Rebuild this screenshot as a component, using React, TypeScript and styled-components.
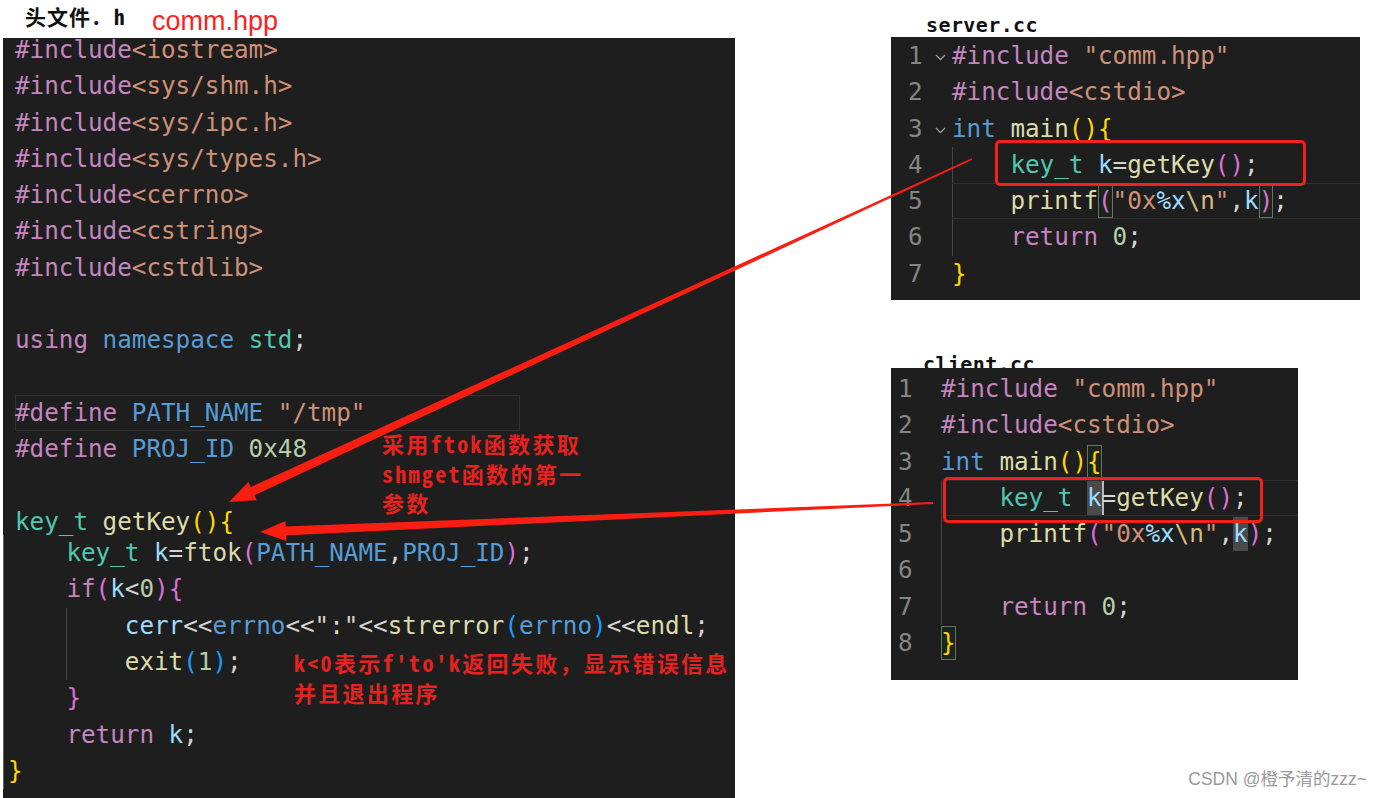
import React from "react";
import styled, { createGlobalStyle, css } from "styled-components";

const GlobalStyle = createGlobalStyle`
  html, body { margin: 0; padding: 0; background: #ffffff; }
  body { width: 1381px; height: 798px; overflow: hidden; }
`;

const C = {
  kw: "#c586c0",
  str: "#ce9178",
  blue: "#569cd6",
  type: "#4ec9b0",
  fn: "#dcdcaa",
  v: "#9cdcfe",
  num: "#b5cea8",
  txt: "#d4d4d4",
  gold: "#ffd700",
  orchid: "#da70d6",
  sky: "#179fff",
  esc: "#d7ba7d",
};

type Tok = [string, string, ("match" | "word" | "cursor")?];

const Page = styled.div`
  position: relative;
  width: 1381px;
  height: 798px;
  display: flex;
  align-items: flex-start;
  background: #ffffff;
  overflow: hidden;
`;

const LeftColumn = styled.div`
  width: 732px;
  margin-left: 3px;
  display: flex;
  flex-direction: column;
`;

const FileHeader = styled.div`
  height: 38px;
  display: flex;
  align-items: flex-start;
`;

const FileLabel = styled.div`
  width: 127px;
  margin-left: 22px;
  padding-top: 4px;
  font-family: "Noto Sans Mono CJK SC", "Noto Sans CJK SC", monospace;
  font-weight: 700;
  font-size: 21px;
  line-height: 24px;
  letter-spacing: 1px;
  color: #111111;
  white-space: pre;
`;

const FileName = styled.div`
  padding-top: 6px;
  font-family: "Liberation Sans", Arial, sans-serif;
  font-size: 27px;
  line-height: 30px;
  color: #ff1f1f;
`;

const mono = css`
  font-family: "DejaVu Sans Mono", "Liberation Mono", monospace;
  font-size: 24.25px;
`;

const CodePanel = styled.div`
  position: relative;
  width: 732px;
  height: 760px;
  background: #1e1e1e;
  ${mono};
`;

const CodeBlock = styled.div<{ $pad: number; $shift: number; $edge?: boolean }>`
  padding-left: ${(p) => p.$pad}px;
  margin-top: ${(p) => p.$shift}px;
  ${(p) =>
    p.$edge &&
    css`
      box-shadow: inset 1px 0 0 #5c5c5c;
    `}
`;

const Line = styled.div<{ $box?: number; $guide?: number; $current?: boolean }>`
  height: 36.3px;
  line-height: 36.3px;
  white-space: pre;
  color: ${C.txt};
  ${(p) =>
    p.$box &&
    css`
      width: ${p.$box}px;
      box-shadow: inset 0 0 0 1px #313131;
    `}
  ${(p) =>
    p.$guide !== undefined &&
    css`
      background: linear-gradient(#474747, #474747) no-repeat ${p.$guide}px 0 / 1px 100%;
    `}
  ${(p) =>
    p.$current &&
    css`
      box-shadow: inset 0 1px 0 #2e2e2e, inset 0 -1px 0 #2e2e2e;
    `}
`;

const CodeCell = styled(Line)`
  flex: 1;
`;

const Tk = styled.span<{ $c: string; $mark?: string }>`
  color: ${(p) => p.$c};
  ${(p) =>
    p.$mark === "match" &&
    css`
      display: inline-block;
      line-height: 34px;
      background: rgba(0, 100, 0, 0.12);
      box-shadow: inset 0 0 0 1px #6e6e6e;
    `}
  ${(p) =>
    p.$mark === "word" &&
    css`
      display: inline-block;
      line-height: 34px;
      background: #4a4a4a;
    `}
  ${(p) =>
    p.$mark === "cursor" &&
    css`
      display: inline-block;
      line-height: 34px;
      background: #4a4a4a;
      box-shadow: 2px 0 0 #b8b8b8;
    `}
`;

const RightColumn = styled.div`
  margin-left: 156px;
  display: flex;
  flex-direction: column;
`;

const EditorTitle = styled.div<{ $pad: number; $top: number; $lh: number }>`
  box-sizing: border-box;
  padding-left: ${(p) => p.$pad}px;
  padding-top: ${(p) => p.$top}px;
  line-height: ${(p) => p.$lh}px;
  height: ${(p) => p.$top + p.$lh}px;
  font-family: "DejaVu Sans Mono", monospace;
  font-weight: 700;
  font-size: 20px;
  letter-spacing: 0.4px;
  color: #111111;
  white-space: pre;
`;

const Editor = styled.div<{ $w: number; $h: number; $top: number; $pt: number }>`
  position: relative;
  width: ${(p) => p.$w}px;
  height: ${(p) => p.$h}px;
  margin-top: ${(p) => p.$top}px;
  padding-top: ${(p) => p.$pt}px;
  box-sizing: border-box;
  background: #1e1e1e;
  ${mono};
`;

const Row = styled.div<{ $pad: number }>`
  display: flex;
  padding-left: ${(p) => p.$pad}px;
  height: 36.3px;
`;

const Num = styled.span`
  flex: none;
  width: 14.6px;
  line-height: 36.3px;
  text-align: right;
  color: #858585;
`;

const Fold = styled.span<{ $w: number }>`
  flex: none;
  width: ${(p) => p.$w}px;
  display: flex;
  align-items: center;
  padding-left: 12px;
  padding-top: 3px;
  box-sizing: border-box;
`;

const Callout = styled.div<{ $x: number; $y: number; $w: number; $h: number }>`
  position: absolute;
  left: ${(p) => p.$x}px;
  top: ${(p) => p.$y}px;
  width: ${(p) => p.$w}px;
  height: ${(p) => p.$h}px;
  box-sizing: border-box;
  border: 3.5px solid #f2211b;
  border-radius: 5px;
  pointer-events: none;
`;

const Note = styled.div<{ $x: number; $y: number }>`
  position: absolute;
  left: ${(p) => p.$x}px;
  top: ${(p) => p.$y}px;
  font-family: "Noto Sans Mono CJK SC", "Noto Sans CJK SC", monospace;
  font-weight: 700;
  font-size: 22px;
  letter-spacing: 2.3px;
  line-height: 29.5px;
  color: #e6221e;
  white-space: pre;
`;

const Overlay = styled.svg`
  position: absolute;
  left: 0;
  top: 0;
  width: 1381px;
  height: 798px;
  pointer-events: none;
`;

const Watermark = styled.div`
  position: absolute;
  right: 14px;
  bottom: 8px;
  font-family: "Liberation Sans", "Noto Sans CJK SC", sans-serif;
  font-size: 17.5px;
  color: #9a9a9a;
  text-shadow: 0 0 1px #ffffff;
`;

const inc = (h: string): Tok[] => [
  ["#include", C.kw],
  [h, C.str],
];

const leftTop: { toks: Tok[]; box?: number }[] = [
  { toks: inc("<iostream>") },
  { toks: inc("<sys/shm.h>") },
  { toks: inc("<sys/ipc.h>") },
  { toks: inc("<sys/types.h>") },
  { toks: inc("<cerrno>") },
  { toks: inc("<cstring>") },
  { toks: inc("<cstdlib>") },
  { toks: [] },
  {
    toks: [
      ["using", C.kw],
      [" ", C.txt],
      ["namespace", C.blue],
      [" ", C.txt],
      ["std", C.type],
      [";", C.txt],
    ],
  },
  { toks: [] },
  {
    toks: [
      ["#define", C.kw],
      [" PATH_NAME", C.blue],
      [" ", C.txt],
      ['"/tmp"', C.str],
    ],
    box: 505,
  },
  {
    toks: [
      ["#define", C.kw],
      [" PROJ_ID", C.blue],
      [" 0x48", C.num],
    ],
  },
  { toks: [] },
  {
    toks: [
      ["key_t", C.type],
      [" getKey", C.fn],
      ["()", C.gold],
      ["{", C.gold],
    ],
  },
];

const leftBottom: { toks: Tok[]; guide?: number }[] = [
  {
    toks: [
      ["    key_t", C.type],
      [" k", C.v],
      ["=", C.txt],
      ["ftok", C.fn],
      ["(", C.orchid],
      ["PATH_NAME", C.blue],
      [",", C.txt],
      ["PROJ_ID", C.blue],
      [")", C.orchid],
      [";", C.txt],
    ],
  },
  {
    toks: [
      ["    if", C.kw],
      ["(", C.orchid],
      ["k", C.v],
      ["<", C.txt],
      ["0", C.num],
      [")", C.orchid],
      ["{", C.orchid],
    ],
  },
  {
    toks: [
      ["        cerr", C.v],
      ["<<", C.txt],
      ["errno", C.blue],
      ["<<", C.txt],
      ['":"', "#ddd2c6"],
      ["<<", C.txt],
      ["strerror", C.fn],
      ["(", C.sky],
      ["errno", C.blue],
      [")", C.sky],
      ["<<", C.txt],
      ["endl", C.fn],
      [";", C.txt],
    ],
    guide: 58,
  },
  {
    toks: [
      ["        exit", C.fn],
      ["(", C.sky],
      ["1", C.num],
      [")", C.sky],
      [";", C.txt],
    ],
    guide: 58,
  },
  { toks: [["    }", C.orchid]] },
  {
    toks: [
      ["    return", C.kw],
      [" k", C.v],
      [";", C.txt],
    ],
  },
  { toks: [["}", C.gold]] },
];

type EdLine = { toks: Tok[]; fold?: boolean; guide?: boolean; current?: boolean };

const serverLines: EdLine[] = [
  {
    toks: [
      ["#include", C.kw],
      [" ", C.txt],
      ['"comm.hpp"', C.str],
    ],
    fold: true,
  },
  { toks: inc("<cstdio>") },
  {
    toks: [
      ["int", C.blue],
      [" main", C.fn],
      ["()", C.gold],
      ["{", C.gold],
    ],
    fold: true,
  },
  {
    toks: [
      ["    key_t", C.type],
      [" k", C.v],
      ["=", C.txt],
      ["getKey", C.fn],
      ["()", C.orchid],
      [";", C.txt],
    ],
    guide: true,
  },
  {
    toks: [
      ["    printf", C.fn],
      ["(", C.orchid, "match"],
      ['"0x', C.str],
      ["%x", C.v],
      ["\\n", C.esc],
      ['"', C.str],
      [",", C.txt],
      ["k", C.v],
      [")", C.orchid, "match"],
      [";", C.txt],
    ],
    guide: true,
    current: true,
  },
  {
    toks: [
      ["    return", C.kw],
      [" 0", C.num],
      [";", C.txt],
    ],
    guide: true,
  },
  { toks: [["}", C.gold]] },
];

const clientLines: EdLine[] = [
  {
    toks: [
      ["#include", C.kw],
      [" ", C.txt],
      ['"comm.hpp"', C.str],
    ],
  },
  { toks: inc("<cstdio>") },
  {
    toks: [
      ["int", C.blue],
      [" main", C.fn],
      ["()", C.gold],
      ["{", C.gold, "match"],
    ],
  },
  {
    toks: [
      ["    key_t", C.type],
      [" ", C.txt],
      ["k", C.v, "cursor"],
      ["=", C.txt],
      ["getKey", C.fn],
      ["()", C.orchid],
      [";", C.txt],
    ],
    guide: true,
    current: true,
  },
  {
    toks: [
      ["    printf", C.fn],
      ["(", C.orchid],
      ['"0x', C.str],
      ["%x", C.v],
      ["\\n", C.esc],
      ['"', C.str],
      [",", C.txt],
      ["k", C.v, "word"],
      [")", C.orchid],
      [";", C.txt],
    ],
    guide: true,
  },
  { toks: [], guide: true },
  {
    toks: [
      ["    return", C.kw],
      [" 0", C.num],
      [";", C.txt],
    ],
    guide: true,
  },
  { toks: [["}", C.gold, "match"]] },
];

const Tokens = ({ toks }: { toks: Tok[] }) => (
  <>
    {toks.map(([t, c, m], i) => (
      <Tk key={i} $c={c} $mark={m}>
        {t}
      </Tk>
    ))}
  </>
);

const Chevron = () => (
  <svg width="11" height="7" viewBox="0 0 11 7">
    <path d="M1 1 L5.5 5.5 L10 1" stroke="#9a9a9a" strokeWidth="1.3" fill="none" />
  </svg>
);

function arrowShapes(
  tx: number,
  ty: number,
  hx: number,
  hy: number,
  w0: number,
  w1: number,
  headLen: number,
  headHalf: number
) {
  const dx = hx - tx;
  const dy = hy - ty;
  const L = Math.hypot(dx, dy);
  const ux = dx / L;
  const uy = dy / L;
  const nx = -uy;
  const ny = ux;
  const bx = hx - ux * headLen;
  const by = hy - uy * headLen;
  const pt = (x: number, y: number) => `${x.toFixed(1)},${y.toFixed(1)}`;
  const shaft = [
    pt(tx + (nx * w0) / 2, ty + (ny * w0) / 2),
    pt(bx + ux * 2 + (nx * w1) / 2, by + uy * 2 + (ny * w1) / 2),
    pt(bx + ux * 2 - (nx * w1) / 2, by + uy * 2 - (ny * w1) / 2),
    pt(tx - (nx * w0) / 2, ty - (ny * w0) / 2),
  ].join(" ");
  const head = [
    pt(hx, hy),
    pt(bx + nx * headHalf, by + ny * headHalf),
    pt(bx - nx * headHalf, by - ny * headHalf),
  ].join(" ");
  return { shaft, head };
}

const Arrow = (p: {
  tx: number;
  ty: number;
  hx: number;
  hy: number;
  w0: number;
  w1: number;
}) => {
  const { shaft, head } = arrowShapes(p.tx, p.ty, p.hx, p.hy, p.w0, p.w1, 26, 10);
  return (
    <g fill="#f81e12">
      <polygon points={shaft} />
      <polygon points={head} />
    </g>
  );
};

const EditorBody = ({
  lines,
  pad,
  foldW,
}: {
  lines: EdLine[];
  pad: number;
  foldW: number;
}) => (
  <>
    {lines.map((l, i) => (
      <Row key={i} $pad={pad}>
        <Num>{i + 1}</Num>
        <Fold $w={foldW}>{l.fold ? <Chevron /> : null}</Fold>
        <CodeCell $guide={l.guide ? 0 : undefined} $current={l.current}>
          <Tokens toks={l.toks} />
        </CodeCell>
      </Row>
    ))}
  </>
);

export default function App() {
  return (
    <>
      <GlobalStyle />
      <Page>
        <LeftColumn>
          <FileHeader>
            <FileLabel>头文件. h</FileLabel>
            <FileName>comm.hpp</FileName>
          </FileHeader>
          <CodePanel>
            <CodeBlock $pad={12} $shift={-6}>
              {leftTop.map((l, i) => (
                <Line key={i} $box={l.box}>
                  <Tokens toks={l.toks} />
                </Line>
              ))}
            </CodeBlock>
            <CodeBlock $pad={5} $shift={-5} $edge>
              {leftBottom.map((l, i) => (
                <Line key={i} $guide={l.guide}>
                  <Tokens toks={l.toks} />
                </Line>
              ))}
            </CodeBlock>
            <Note $x={379} $y={391}>
              {"采用ftok函数获取\nshmget函数的第一\n参数"}
            </Note>
            <Note $x={291} $y={610}>
              {"k<0表示f'to'k返回失败，显示错误信息\n并且退出程序"}
            </Note>
          </CodePanel>
        </LeftColumn>

        <RightColumn>
          <EditorTitle $pad={35} $top={13} $lh={24}>
            server.cc
          </EditorTitle>
          <Editor $w={469} $h={263} $top={0} $pt={1}>
            <EditorBody lines={serverLines} pad={17} foldW={29.4} />
            <Callout $x={104} $y={103} $w={311} $h={46} />
          </Editor>
          <EditorTitle $pad={32} $top={54} $lh={20}>
            client.cc
          </EditorTitle>
          <Editor $w={407} $h={312} $top={-6} $pt={3}>
            <EditorBody lines={clientLines} pad={7} foldW={28.4} />
            <Callout $x={52} $y={109} $w={320} $h={46} />
          </Editor>
        </RightColumn>

        <Overlay viewBox="0 0 1381 798">
          <Arrow tx={972} ty={159} hx={229} hy={502} w0={1.5} w1={9} />
          <Arrow tx={933} ty={503} hx={260} hy={532} w0={2} w1={9} />
        </Overlay>

        <Watermark>CSDN @橙予清的zzz~</Watermark>
      </Page>
    </>
  );
}
